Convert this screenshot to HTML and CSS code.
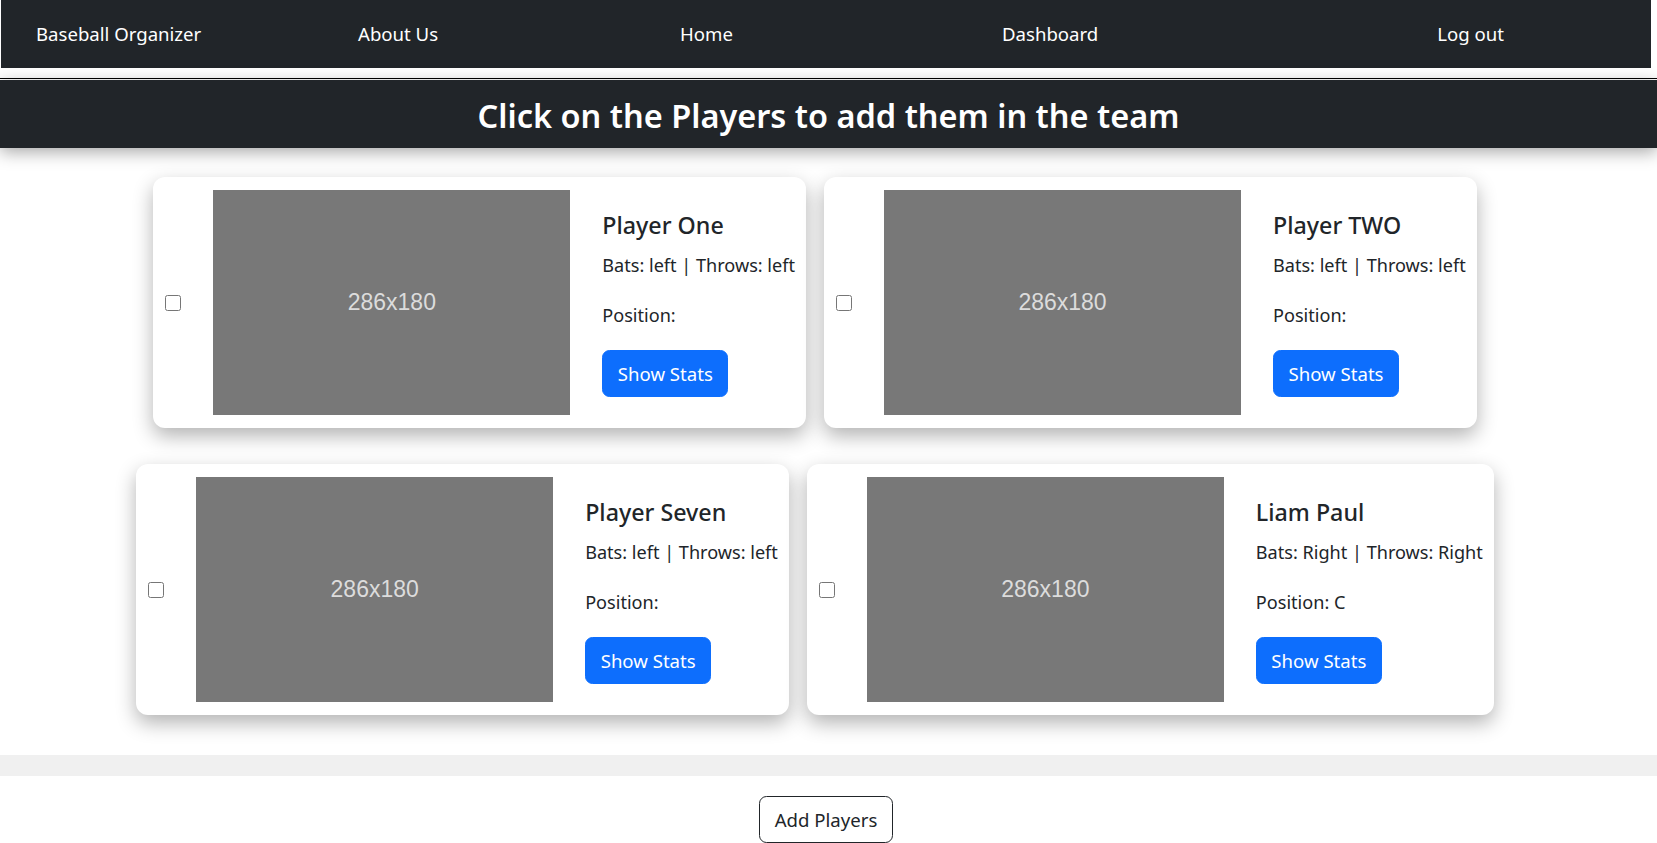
FILE: index.html
```html
<!DOCTYPE html>
<html lang="en">
<head>
<meta charset="utf-8">
<title>Baseball Organizer</title>
<link rel="stylesheet" href="styles.css">
</head>
<body>
<nav class="navbar">
  <a class="nav-item" href="#">Baseball Organizer</a>
  <a class="nav-item" href="#">About Us</a>
  <a class="nav-item" href="#">Home</a>
  <a class="nav-item" href="#">Dashboard</a>
  <a class="nav-item nav-logout" href="#">Log out</a>
</nav>
<div class="divider"></div>
<header class="page-header">
  <h3 class="page-title">Click on the Players to add them in the team</h3>
</header>
<main class="players">
  <div class="card-row">
    <div class="card">
      <div class="check-col"><input type="checkbox" class="pick"></div>
      <div class="thumb">286x180</div>
      <div class="card-body">
        <h5 class="card-title">Player One</h5>
        <p class="card-text">Bats: left | Throws: left</p>
        <p class="card-text">Position: </p>
        <button class="btn btn-primary">Show Stats</button>
      </div>
    </div>
    <div class="card">
      <div class="check-col"><input type="checkbox" class="pick"></div>
      <div class="thumb">286x180</div>
      <div class="card-body">
        <h5 class="card-title">Player TWO</h5>
        <p class="card-text">Bats: left | Throws: left</p>
        <p class="card-text">Position: </p>
        <button class="btn btn-primary">Show Stats</button>
      </div>
    </div>
  </div>
  <div class="card-row">
    <div class="card">
      <div class="check-col"><input type="checkbox" class="pick"></div>
      <div class="thumb">286x180</div>
      <div class="card-body">
        <h5 class="card-title">Player Seven</h5>
        <p class="card-text">Bats: left | Throws: left</p>
        <p class="card-text">Position: </p>
        <button class="btn btn-primary">Show Stats</button>
      </div>
    </div>
    <div class="card">
      <div class="check-col"><input type="checkbox" class="pick"></div>
      <div class="thumb">286x180</div>
      <div class="card-body">
        <h5 class="card-title">Liam Paul</h5>
        <p class="card-text">Bats: Right | Throws: Right</p>
        <p class="card-text">Position: C</p>
        <button class="btn btn-primary">Show Stats</button>
      </div>
    </div>
  </div>
</main>
<div class="band"></div>
<div class="actions">
  <button class="btn btn-outline-dark">Add Players</button>
</div>
</body>
</html>
```
FILE: styles.css
```css
* {
  box-sizing: border-box;
}

body {
  margin: 0;
  font-family: "Noto Sans", "Open Sans", sans-serif;
  font-size: 18.6px;
  color: #212529;
  background: #fff;
}

.navbar {
  display: flex;
  align-items: center;
  height: 68px;
  margin: 0 6px 0 1px;
  padding-left: 35px;
  background: #212529;
}

.nav-item {
  width: 322px;
  color: #fff;
  text-decoration: none;
  font-size: 18.6px;
  line-height: 28px;
}

.nav-logout {
  width: auto;
  margin-left: auto;
  margin-right: 147px;
}

.divider {
  height: 2px;
  margin-top: 10px;
  border-top: 1px solid #000;
  background: #fff;
}

.page-header {
  display: flex;
  align-items: center;
  justify-content: center;
  height: 68px;
  padding-top: 2px;
  background: #212529;
  box-shadow: 0 4px 16px rgba(0, 0, 0, 0.35);
}

.page-title {
  margin: 0;
  color: #fff;
  font-size: 32.5px;
  font-weight: 600;
  line-height: 1.2;
}

.players {
  padding: 29px 27px 0 0;
}

.card-row {
  display: flex;
  justify-content: center;
  gap: 18px;
}

.card-row + .card-row {
  margin-top: 36px;
}

.card {
  display: flex;
  padding: 13px 11px 13px 12px;
  background: #fff;
  border-radius: 12px;
  box-shadow: 0 8px 20px rgba(0, 0, 0, 0.3);
}

.check-col {
  display: flex;
  align-items: center;
  width: 48px;
  flex: none;
}

.pick {
  width: 16px;
  height: 16px;
  margin: 0;
}

.thumb {
  display: flex;
  align-items: center;
  justify-content: center;
  flex: none;
  width: 357px;
  height: 225px;
  background: #787878;
  color: #dcdcdc;
  font-family: "Liberation Sans", Arial, sans-serif;
  font-size: 23px;
}

.card-body {
  padding: 20px 0 0 32px;
}

.card-title {
  margin: 0 0 10px;
  font-size: 23.25px;
  font-weight: 500;
  line-height: 30px;
}

.card-text {
  margin: 0 0 20px;
  font-size: 18.1px;
  line-height: 30px;
  white-space: nowrap;
}

.btn {
  display: inline-block;
  padding: 7.5px 14.5px;
  font: inherit;
  font-size: 18.6px;
  line-height: 30px;
  border: 1px solid transparent;
  border-radius: 7.5px;
  cursor: pointer;
}

.btn-primary {
  background: #0d6efd;
  border-color: #0d6efd;
  color: #fff;
}

.btn-outline-dark {
  background: transparent;
  border-color: #212529;
  color: #212529;
}

.band {
  height: 21px;
  margin-top: 40px;
  background: #f0f0f0;
}

.actions {
  display: flex;
  justify-content: center;
  padding: 20px 5px 0 0;
}
```
